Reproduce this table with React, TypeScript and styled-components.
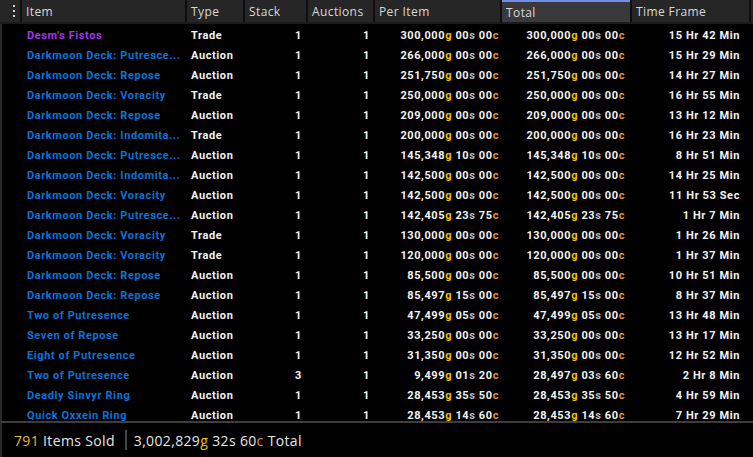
import React from "react";
import styled, { createGlobalStyle, css } from "styled-components";

const Global = createGlobalStyle`
  html, body { margin: 0; padding: 0; background: #000; }
  body { width: 753px; height: 457px; overflow: hidden; }
`;

const COLS = "20px 163px 56px 61px 65px 125px 128px 117px 2px";

const Frame = styled.div`
  width: 753px;
  height: 457px;
  display: flex;
  flex-direction: column;
  background: #000;
  overflow: hidden;
`;

const HeaderRow = styled.div`
  display: grid;
  grid-template-columns: ${COLS};
  column-gap: 2px;
  height: 22px;
  flex-shrink: 0;
  background: #0e0e0e;
  border-bottom: 2px solid #1c1c1c;
`;

const HeadCell = styled.div<{ $active?: boolean }>`
  background: ${(p) => (p.$active ? "#3a3a3d" : "#262626")};
  color: #d8d8d8;
  font-family: "Open Sans", "Liberation Sans", sans-serif;
  font-size: 12px;
  letter-spacing: 0.4px;
  display: flex;
  align-items: center;
  padding-left: 4px;
  box-sizing: border-box;
  white-space: nowrap;
  overflow: hidden;
  ${(p) =>
    p.$active &&
    css`
      border-top: 2px solid #6f8ee6;
    `}
`;

const MenuCell = styled(HeadCell)`
  justify-content: center;
  padding-left: 8px;
`;

const Body = styled.div`
  flex: 1;
  overflow: hidden;
  padding-top: 1px;
  border-left: 2px solid #2a2a2a;
  border-bottom: 2px solid #3d3d3d;
`;

const Row = styled.div`
  display: grid;
  grid-template-columns: 18px 163px 56px 61px 65px 125px 128px 117px 2px;
  column-gap: 2px;
  height: 20px;
  align-items: center;
  font-family: "Roboto", "Liberation Sans", sans-serif;
  font-weight: 700;
  font-size: 11px;
  letter-spacing: 0.6px;
  color: #f4f4f4;
`;

const Cell = styled.div<{ $right?: boolean; $pr?: number }>`
  white-space: nowrap;
  overflow: hidden;
  padding-left: 4px;
  padding-right: ${(p) => p.$pr ?? 3}px;
  text-align: ${(p) => (p.$right ? "right" : "left")};
`;

const ItemCell = styled(Cell)<{ $q: "epic" | "rare" }>`
  color: ${(p) => (p.$q === "epic" ? "#a335ee" : "#0a73dc")};
  padding-left: 5px;
  padding-right: 0;
`;

const Gold = styled.span`
  color: #f2c200;
`;
const Silver = styled.span`
  color: #bdbdbd;
`;
const Copper = styled.span`
  color: #e8903a;
`;

const Footer = styled.div`
  height: 34px;
  flex-shrink: 0;
  display: flex;
  align-items: center;
  border-left: 2px solid #2a2a2a;
  font-family: "Open Sans", "Liberation Sans", sans-serif;
  font-size: 14px;
  letter-spacing: 0.35px;
  color: #e6e6e6;
  padding-left: 12px;
`;

const FooterPart = styled.span`
  white-space: nowrap;
`;

const Count = styled.span`
  color: #e8b92a;
`;

const Divider = styled.div`
  width: 2px;
  height: 20px;
  background: #444;
  margin: 0 7px 0 10px;
`;

const Dots = () => (
  <svg width="4" height="12" viewBox="0 0 4 12">
    <rect x="1" y="0" width="2" height="2" fill="#cfcfcf" />
    <rect x="1" y="5" width="2" height="2" fill="#cfcfcf" />
    <rect x="1" y="10" width="2" height="2" fill="#cfcfcf" />
  </svg>
);

const Money = ({ v }: { v: string }) => {
  const [g, s, c] = v.split(" ");
  return (
    <>
      {g}
      <Gold>g</Gold> {s}
      <Silver>s</Silver> {c}
      <Copper>c</Copper>
    </>
  );
};

type R = [string, "epic" | "rare", string, number, number, string, string, string];

const PUT = "Darkmoon Deck: Putresce...";
const IND = "Darkmoon Deck: Indomita...";

const rows: R[] = [
  ["Desm's Fistos", "epic", "Trade", 1, 1, "300,000 00 00", "300,000 00 00", "15 Hr 42 Min"],
  [PUT, "rare", "Auction", 1, 1, "266,000 00 00", "266,000 00 00", "15 Hr 29 Min"],
  ["Darkmoon Deck: Repose", "rare", "Auction", 1, 1, "251,750 00 00", "251,750 00 00", "14 Hr 27 Min"],
  ["Darkmoon Deck: Voracity", "rare", "Trade", 1, 1, "250,000 00 00", "250,000 00 00", "16 Hr 55 Min"],
  ["Darkmoon Deck: Repose", "rare", "Auction", 1, 1, "209,000 00 00", "209,000 00 00", "13 Hr 12 Min"],
  [IND, "rare", "Trade", 1, 1, "200,000 00 00", "200,000 00 00", "16 Hr 23 Min"],
  [PUT, "rare", "Auction", 1, 1, "145,348 10 00", "145,348 10 00", "8 Hr 51 Min"],
  [IND, "rare", "Auction", 1, 1, "142,500 00 00", "142,500 00 00", "14 Hr 25 Min"],
  ["Darkmoon Deck: Voracity", "rare", "Auction", 1, 1, "142,500 00 00", "142,500 00 00", "11 Hr 53 Sec"],
  [PUT, "rare", "Auction", 1, 1, "142,405 23 75", "142,405 23 75", "1 Hr 7 Min"],
  ["Darkmoon Deck: Voracity", "rare", "Trade", 1, 1, "130,000 00 00", "130,000 00 00", "1 Hr 26 Min"],
  ["Darkmoon Deck: Voracity", "rare", "Trade", 1, 1, "120,000 00 00", "120,000 00 00", "1 Hr 37 Min"],
  ["Darkmoon Deck: Repose", "rare", "Auction", 1, 1, "85,500 00 00", "85,500 00 00", "10 Hr 51 Min"],
  ["Darkmoon Deck: Repose", "rare", "Auction", 1, 1, "85,497 15 00", "85,497 15 00", "8 Hr 37 Min"],
  ["Two of Putresence", "rare", "Auction", 1, 1, "47,499 05 00", "47,499 05 00", "13 Hr 48 Min"],
  ["Seven of Repose", "rare", "Auction", 1, 1, "33,250 00 00", "33,250 00 00", "13 Hr 17 Min"],
  ["Eight of Putresence", "rare", "Auction", 1, 1, "31,350 00 00", "31,350 00 00", "12 Hr 52 Min"],
  ["Two of Putresence", "rare", "Auction", 3, 1, "9,499 01 20", "28,497 03 60", "2 Hr 8 Min"],
  ["Deadly Sinvyr Ring", "rare", "Auction", 1, 1, "28,453 35 50", "28,453 35 50", "4 Hr 59 Min"],
  ["Quick Oxxein Ring", "rare", "Auction", 1, 1, "28,453 14 60", "28,453 14 60", "7 Hr 29 Min"],
];

export default function App() {
  return (
    <Frame>
      <Global />
      <HeaderRow>
        <MenuCell>
          <Dots />
        </MenuCell>
        <HeadCell>Item</HeadCell>
        <HeadCell>Type</HeadCell>
        <HeadCell>Stack</HeadCell>
        <HeadCell>Auctions</HeadCell>
        <HeadCell>Per Item</HeadCell>
        <HeadCell $active>Total</HeadCell>
        <HeadCell>Time Frame</HeadCell>
        <HeadCell />
      </HeaderRow>
      <Body>
        {rows.map((r, i) => (
          <Row key={i}>
            <span />
            <ItemCell $q={r[1]}>{r[0]}</ItemCell>
            <Cell>{r[2]}</Cell>
            <Cell $right $pr={4}>{r[3]}</Cell>
            <Cell $right $pr={3}>{r[4]}</Cell>
            <Cell $right $pr={1}>
              <Money v={r[5]} />
            </Cell>
            <Cell $right $pr={5}>
              <Money v={r[6]} />
            </Cell>
            <Cell $right $pr={9}>{r[7]}</Cell>
            <span />
          </Row>
        ))}
      </Body>
      <Footer>
        <FooterPart>
          <Count>791</Count> Items Sold
        </FooterPart>
        <Divider />
        <FooterPart>
          3,002,829<Gold>g</Gold> 32s 60<Copper>c</Copper> Total
        </FooterPart>
      </Footer>
    </Frame>
  );
}
